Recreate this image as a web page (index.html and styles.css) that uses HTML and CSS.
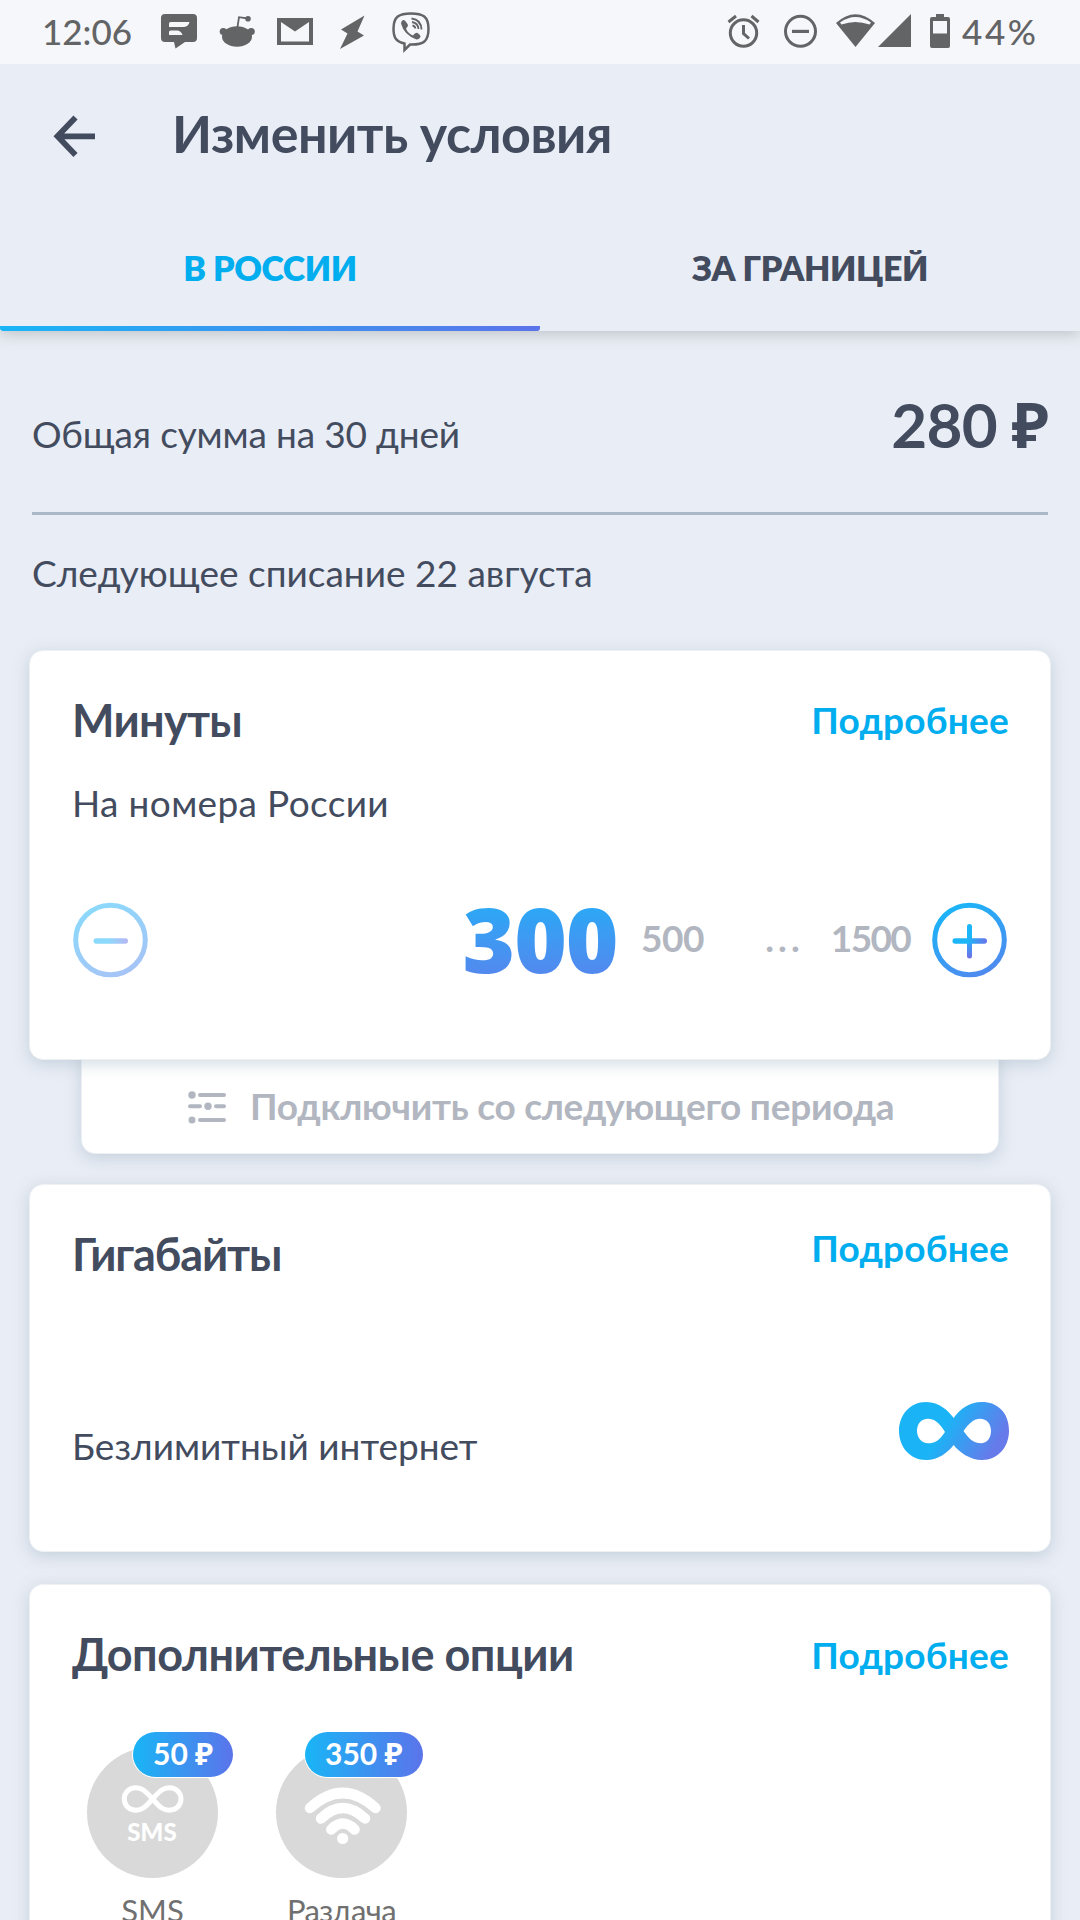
FILE: index.html
```html
<!DOCTYPE html>
<html lang="ru">
<head>
<meta charset="utf-8">
<title>Изменить условия</title>
<link rel="stylesheet" href="styles.css">
</head>
<body>
<div class="status">
  <span class="time">12:06</span>
  <svg class="si" width="58" height="64" viewBox="155 0 58 64"><path fill-rule="evenodd" d="M165 14H193a4 4 0 0 1 4 4V38a4 4 0 0 1-4 4H185L175.500 48.500 174 42H165a4 4 0 0 1-4-4V18a4 4 0 0 1 4-4ZM170.500 22Q169 22 169 23.500V27H184Q188.500 26.500 189.500 22ZM170.500 30.500Q169 30.500 169 32V35H182.500Q181 30.500 177 30.500Z"/></svg>
  <svg class="si" width="58" height="64" viewBox="213 0 58 64"><ellipse cx="237" cy="36.500" rx="15" ry="10.300"/><circle cx="223.300" cy="31.500" r="3.600"/><circle cx="251.200" cy="31.500" r="3.600"/><circle cx="248" cy="18.700" r="2.800"/><path class="line thin" d="M237.500 27L239 17.200 248 18.500"/></svg>
  <svg class="si" width="58" height="64" viewBox="271 0 58 64"><path fill-rule="evenodd" d="M277 18H313V45H277ZM281 22V41.500H309V22L295 31.500Z"/></svg>
  <svg class="si" width="58" height="64" viewBox="329 0 58 64"><path d="M364.500 15.500L341 29.500 347.500 33.500 340 49 364 35.500 357.500 31.500Z"/></svg>
  <svg class="si" width="58" height="64" viewBox="387 0 58 64"><path class="line" stroke-width="2.500" d="M411 13.500C423 13.500 428.500 16.500 428.500 29S423 44.500 412 44.500H410L404.500 50V43.500C396.500 42 393.500 38 393.500 29 393.500 16.500 399 13.500 411 13.500Z"/><path d="M403 20Q405 19.500 408 25 408 26.500 406 28.500 407.500 33 413 35.500 415 32.500 417 32.800 420.500 34.500 420.500 37 419 39.500 416.500 39.500 404 35 401 23.500 401 21 403 20Z"/><path class="line thin" d="M411.500 18.500Q421 19.500 421.500 29.500M412 22Q418 23 418.500 29M412.500 25.500Q415 26 415.300 28.500"/></svg>
  <span class="grow"></span>
  <svg class="si" width="57" height="64" viewBox="715 0 57 64"><circle class="line" cx="743.500" cy="33" r="13.200" stroke-width="3"/><path class="line" stroke-width="3" d="M743.500 25V33.500L749 38.500M728.500 22L736 16M751.500 16L758.500 22"/></svg>
  <svg class="si" width="57" height="64" viewBox="772 0 57 64"><circle class="line" cx="800.500" cy="31.300" r="15" stroke-width="3"/><path d="M792 29.800H809V33H792Z"/></svg>
  <svg class="si" width="90" height="64" viewBox="829 0 90 64"><path fill-rule="evenodd" d="M836 23Q855.500 5.500 875 23L855.500 47ZM841.500 24.500Q855.500 19.500 869.500 24.500L871 22.500Q855.500 11.500 840 22.500Z"/><path d="M911 14V47H878Z"/></svg>
  <svg class="si" width="41" height="64" viewBox="919 0 41 64"><path fill-rule="evenodd" d="M936 14H944V17H948Q950 17 950 19V46Q950 48 948 48H932Q930 48 930 46V19Q930 17 932 17H936ZM933 21V33.500H947V21Z"/></svg>
  <span class="pct">44%</span>
</div>

<header class="head">
  <div class="bar">
    <svg class="back" width="48" height="48" viewBox="50 112 48 48"><path d="M95 136.300H58M75.500 117.500L57.500 136.300 75.500 155"/></svg>
    <h1>Изменить условия</h1>
  </div>
  <nav class="tabs">
    <a class="tab on">В РОССИИ</a>
    <a class="tab">ЗА ГРАНИЦЕЙ</a>
  </nav>
</header>

<section class="sum">
  <div class="total"><span class="reg">Общая сумма на 30 дней</span><b>280 ₽</b></div>
  <p class="next">Следующее списание 22 августа</p>
</section>

<section class="card minutes">
  <div class="row"><h2>Минуты</h2><a class="more">Подробнее</a></div>
  <p class="sub">На номера России</p>
  <div class="picker">
    <svg class="dim" width="76" height="76" viewBox="0 0 76 76"><defs><linearGradient id="ring" x1=".2" y1="0" x2=".7" y2="1"><stop offset="0" stop-color="#19b6f8"/><stop offset="1" stop-color="#4f8aef"/></linearGradient><linearGradient id="barx" gradientUnits="userSpaceOnUse" x1="22" y1="0" x2="56" y2="0"><stop offset=".4" stop-color="#1cb6f8"/><stop offset="1" stop-color="#6f70e8"/></linearGradient><linearGradient id="bary" gradientUnits="userSpaceOnUse" x1="0" y1="22" x2="0" y2="56"><stop offset=".4" stop-color="#1cb6f8"/><stop offset="1" stop-color="#6f70e8"/></linearGradient></defs><circle cx="38.500" cy="38" r="34.800" fill="none" stroke="url(#ring)" stroke-width="5"/><rect x="21.500" y="36.300" width="34.500" height="5.400" rx="2.700" fill="url(#barx)"/></svg>
    <b class="big">300</b>
    <span class="opt">500</span>
    <span class="opt dots">...</span>
    <span class="opt last">1500</span>
    <svg class="plus" width="76" height="76" viewBox="0 0 76 76"><circle cx="37.500" cy="38" r="34.800" fill="none" stroke="url(#ring)" stroke-width="5"/><rect x="35" y="22" width="5" height="34.500" rx="2.500" fill="url(#bary)"/><rect x="20.500" y="36.300" width="34.500" height="5.400" rx="2.700" fill="url(#barx)"/></svg>
  </div>
</section>
<div class="later">
  <svg width="38" height="33" viewBox="188 1091 38 33"><g stroke="#b1b6c0" stroke-width="4" stroke-linecap="round"><path d="M200 1095H224M190 1106.300H200M216 1106.300H224M200 1120H224"/></g><g fill="#b1b6c0"><circle cx="192" cy="1095" r="3.700"/><circle cx="208" cy="1106.300" r="3.700"/><circle cx="192" cy="1120" r="3.500"/></g></svg>
  <span>Подключить со следующего периода</span>
</div>

<section class="card gigs">
  <div class="row"><h2>Гигабайты</h2><a class="more">Подробнее</a></div>
  <div class="row net"><span class="reg">Безлимитный интернет</span>
  <svg class="inf" width="110" height="58" viewBox="899 1402 110 58"><defs><linearGradient id="inf" gradientUnits="userSpaceOnUse" x1="911" y1="1402" x2="994" y2="1450"><stop offset=".42" stop-color="#1ab4f6"/><stop offset="1" stop-color="#677ae9"/></linearGradient></defs><path fill="url(#inf)" fill-rule="evenodd" d="M953.700 1418C948 1411 940 1402 926 1402 910 1402 899 1415 899 1431 899 1447 910 1460 926 1460 939 1460 948 1452 953.700 1445 959 1452 970 1460 982 1460 998 1460 1009 1447 1009 1431 1009 1412 997 1402 982 1402 969 1402 960 1409 953.700 1418ZM945 1432C939 1422 934 1418.700 928 1418.700 921 1418.700 917 1424 917 1431 917 1438 922 1443.300 928 1443.300 935 1443.300 939 1441 945 1432ZM963.500 1431C969 1423 974 1418.700 980 1418.700 987 1418.700 991 1424 991 1431 991 1438 987 1443.300 981 1443.300 974 1443.300 969 1439 963.500 1431Z"/></svg></div>
</section>

<section class="card extra">
  <div class="row"><h2>Дополнительные опции</h2><a class="more">Подробнее</a></div>
  <div class="options">
    <div class="option">
      <svg width="131" height="131" viewBox="87 1746.500 131 131"><circle cx="152.500" cy="1812" r="65.500" fill="#d9d9d9"/><path d="M152.600 1798.500C145 1790 142 1787.300 136 1787.300 129 1787.300 124.300 1792 124.300 1798.500S129 1809.700 136 1809.700C142 1809.700 145 1807 152.600 1798.500 160 1790 163 1787.300 169.500 1787.300 176 1787.300 181 1792 181 1798.500S176 1809.700 169.500 1809.700C163 1809.700 160 1807 152.600 1798.500Z" fill="none" stroke="#fff" stroke-width="5"/><text x="152" y="1840.500" class="ictext">SMS</text></svg>
      <span class="badge">50 ₽</span>
      <span class="label">SMS</span>
    </div>
    <div class="option">
      <svg width="131" height="131" viewBox="276 1746.500 131 131"><circle cx="341.500" cy="1812" r="65.500" fill="#d9d9d9"/><g fill="none" stroke="#fff" stroke-width="10.500" stroke-linecap="round"><path d="M310 1807.500Q342.700 1777.500 375.500 1807.500M321 1818Q342.700 1797 365 1818M331.300 1829Q342.700 1817 354.500 1829"/></g><circle cx="342.700" cy="1838" r="5.600" fill="#fff"/></svg>
      <span class="badge">350 ₽</span>
      <span class="label share">Раздача</span>
    </div>
  </div>
</section>
</body>
</html>
```

FILE: styles.css
```css
* { box-sizing: border-box; }
body {
  margin: 0;
  height: 1920px;
  overflow: hidden;
  background: #e9edf5;
  color: #434c5f;
  font-family: Lato, "Noto Sans", sans-serif;
}
h1, h2, p { margin: 0; }
svg { display: block; flex: none; }

.status {
  position: relative;
  z-index: 1;
  display: flex;
  height: 64px;
  background: #f6f7fb;
  color: #626465;
  font-size: 35px;
  font-weight: 500;
  line-height: 63px;
}
.time { width: 155px; padding-left: 42px; }
.grow { flex: 1; }
.pct { width: 120px; padding-left: 2px; letter-spacing: 2.6px; }
.si { fill: #626465; }
.si .line { fill: none; stroke: #626465; }
.si .thin { stroke-width: 1.8; }

.head { background: #e9edf5; box-shadow: 0 3px 14px rgba(110, 118, 118, .36); }
.bar { display: flex; align-items: center; height: 136px; padding-left: 50px; gap: 74px; }
.back { margin-top: 8px; fill: none; stroke: #434c5f; stroke-width: 5.8; }
h1 { font-size: 52px; font-weight: 700; line-height: 136px; letter-spacing: -.5px; padding-top: 2px; }
.tabs { display: flex; height: 131px; }
.tab {
  flex: 1;
  text-align: center;
  font-size: 34px;
  font-weight: 800;
  line-height: 135px;
  letter-spacing: -.4px;
}
.on {
  color: #00aeef;
  background: linear-gradient(90deg, #19b5f6, #5b74ea) 0 100% / 100% 5px no-repeat;
  border-radius: 0 0 3px 3px;
}

.sum { padding: 0 32px; }
.reg, .next { font-size: 37px; font-weight: 400; }
.total {
  display: flex;
  justify-content: space-between;
  align-items: baseline;
  height: 184px;
  padding-top: 5px;
  border-bottom: 3px solid #a9b9c8;
}
.total .reg { letter-spacing: -.17px; }
.total b { font-size: 62px; font-weight: 700; line-height: 176px; letter-spacing: -.7px; }
.next { line-height: 115px; }

.card, .later {
  background: #fff;
  border: 1px solid #edf1f4;
  box-shadow: 0 4px 16px rgba(145, 170, 185, .42);
}
.card { margin: 0 29px; padding: 0 41px 0 42px; border-radius: 14px; }
.row { display: flex; justify-content: space-between; align-items: flex-start; }
h2 { font-size: 45px; font-weight: 700; line-height: 60px; letter-spacing: -.5px; }
.more { color: #00aeef; font-size: 37px; font-weight: 700; line-height: 60px; letter-spacing: .2px; }

.minutes { position: relative; z-index: 1; height: 410px; margin-top: 20px; padding-top: 39px; }
.minutes h2 { letter-spacing: -.7px; }
.sub { font-size: 37px; line-height: 60px; margin-top: 23px; letter-spacing: .35px; }
.picker {
  display: grid;
  grid-template-columns: 76px 307px 171px 94px 30px 66px 110px 6px 76px;
  align-items: center;
  height: 76px;
  margin: 69px -3px 0 0;
  text-align: center;
}
.dim { opacity: .5; }
.big {
  grid-column: 3;
  font-family: "Open Sans", sans-serif;
  font-size: 90px;
  font-weight: 800;
  line-height: 76px;
  letter-spacing: -1px;
  margin: -5px 0 0 -1px;
  background: linear-gradient(#28abf6, #5488ee);
  -webkit-background-clip: text;
  background-clip: text;
  color: transparent;
}
.opt { color: #b1b6c0; font-size: 37px; font-weight: 700; line-height: 72px; margin: -4px 0 0 -1px; letter-spacing: -.4px; }
.dots { grid-column: 6; letter-spacing: 4px; margin-left: 3px; }
.last { letter-spacing: -1.6px; }
.plus { grid-column: 9; }

.later {
  display: flex;
  align-items: center;
  height: 112px;
  margin: -18px 81px 0;
  padding: 15px 0 0 106px;
  gap: 24px;
  border-radius: 14px;
  color: #b1b6c0;
  font-size: 37px;
  font-weight: 700;
  letter-spacing: -.26px;
  white-space: nowrap;
}
.later svg { margin-top: 3px; }

.gigs { height: 368px; margin-top: 30px; padding-top: 39px; }
.gigs h2 { letter-spacing: -1.1px; }
.gigs .more { margin-top: -6px; }
.net { margin-top: 118px; }
.net .reg { line-height: 60px; margin-top: 14px; }
.extra { height: 420px; margin-top: 32px; padding-top: 39px; border-bottom: 0; }
.extra .more { padding-top: 1px; }
.options { display: flex; gap: 58px; margin: 62px 0 0 15px; }
.option { position: relative; width: 131px; }
.badge {
  position: absolute;
  left: 46px;
  top: -15px;
  height: 45px;
  padding: 0 20px;
  border-radius: 23px;
  background: linear-gradient(90deg, #19b5f6, #5b74ea);
  box-shadow: 0 0 0 1px #fff;
  color: #fff;
  font-size: 30px;
  font-weight: 700;
  line-height: 42px;
  white-space: nowrap;
}
.option + .option .badge { left: 29px; }
.label {
  display: block;
  margin-top: 14px;
  color: #707070;
  font-size: 31px;
  line-height: 36px;
  text-align: center;
}
.share { letter-spacing: -.6px; }
.ictext { fill: #fff; font-size: 24px; font-weight: 900; text-anchor: middle; }
```
